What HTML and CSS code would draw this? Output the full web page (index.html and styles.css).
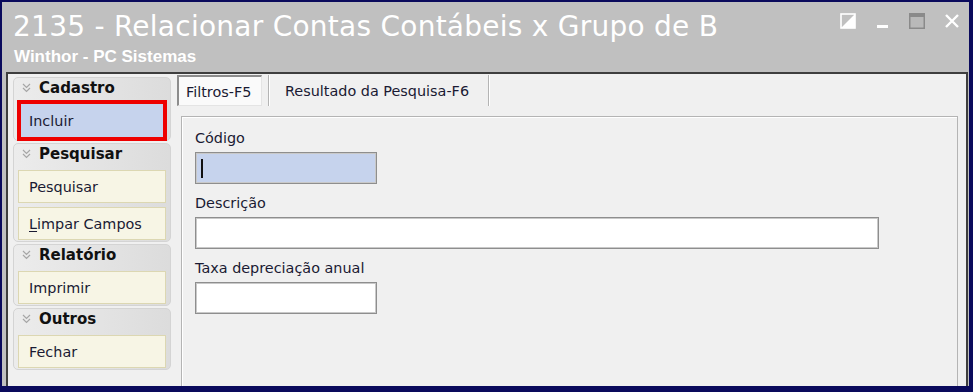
FILE: index.html
```html
<!DOCTYPE html>
<html lang="pt-BR">
<head>
<meta charset="utf-8">
<title>2135 - Relacionar Contas Contábeis x Grupo de B</title>
<link rel="stylesheet" href="styles.css">
</head>
<body>
<div class="window">
  <div class="titlebar">
    <div class="titles">
      <div class="title">2135 - Relacionar Contas Contábeis x Grupo de B</div>
      <div class="subtitle">Winthor - PC Sistemas</div>
    </div>
    <div class="controls">
      <span class="ctl"><svg width="16" height="16" viewBox="0 0 16 16"><rect x="1" y="1" width="14" height="14" fill="none" stroke="#fff" stroke-width="1.6"/><polygon points="15,1 15,15 1,15" fill="#fff"/></svg></span>
      <span class="ctl"><svg width="16" height="16" viewBox="0 0 16 16"><rect x="2" y="12" width="11" height="3" fill="#fff"/></svg></span>
      <span class="ctl"><svg width="16" height="16" viewBox="0 0 16 16"><rect x="0.75" y="0.75" width="14.5" height="14.5" fill="#b9b9b9" stroke="#8a8a8a" stroke-width="1.5"/><rect x="1" y="1" width="14" height="3" fill="#8a8a8a"/></svg></span>
      <span class="ctl"><svg width="16" height="16" viewBox="0 0 16 16"><path d="M2 2 L14 14 M14 2 L2 14" stroke="#fff" stroke-width="2.4" fill="none"/></svg></span>
    </div>
  </div>
  <div class="frame">
    <aside class="sidebar">
      <div class="group">
        <div class="group-head"><svg class="chev" width="9" height="10" viewBox="0 0 9 10"><path d="M1 1 L4.5 4.5 L8 1 M1 5 L4.5 8.5 L8 5" fill="none" stroke="#a6a6a6" stroke-width="1.2"/></svg><span>Cadastro</span></div>
        <div class="btn selected">Incluir</div>
      </div>
      <div class="group">
        <div class="group-head"><svg class="chev" width="9" height="10" viewBox="0 0 9 10"><path d="M1 1 L4.5 4.5 L8 1 M1 5 L4.5 8.5 L8 5" fill="none" stroke="#a6a6a6" stroke-width="1.2"/></svg><span>Pesquisar</span></div>
        <div class="btn">Pesquisar</div>
        <div class="btn"><u>L</u>impar Campos</div>
      </div>
      <div class="group">
        <div class="group-head"><svg class="chev" width="9" height="10" viewBox="0 0 9 10"><path d="M1 1 L4.5 4.5 L8 1 M1 5 L4.5 8.5 L8 5" fill="none" stroke="#a6a6a6" stroke-width="1.2"/></svg><span>Relatório</span></div>
        <div class="btn">Imprimir</div>
      </div>
      <div class="group">
        <div class="group-head"><svg class="chev" width="9" height="10" viewBox="0 0 9 10"><path d="M1 1 L4.5 4.5 L8 1 M1 5 L4.5 8.5 L8 5" fill="none" stroke="#a6a6a6" stroke-width="1.2"/></svg><span>Outros</span></div>
        <div class="btn">Fechar</div>
      </div>
    </aside>
    <main class="main">
      <div class="tabs">
        <div class="tab active">Filtros-F5</div>
        <div class="tab-sep"></div>
        <div class="tab">Resultado da Pesquisa-F6</div>
        <div class="tab-sep"></div>
      </div>
      <div class="panel">
        <div class="field">
          <label class="label">Código</label>
          <div class="input input-short focused"><span class="caret"></span></div>
        </div>
        <div class="field">
          <label class="label">Descrição</label>
          <div class="input input-long"></div>
        </div>
        <div class="field">
          <label class="label">Taxa depreciação anual</label>
          <div class="input input-short"></div>
        </div>
      </div>
    </main>
  </div>
</div>
</body>
</html>
```

FILE: styles.css
```css
* { box-sizing: border-box; }
html, body { margin: 0; height: 100%; }
body {
  background: #0a0a5c;
  padding: 2px 4px 6px 2px;
  font-family: "DejaVu Sans", sans-serif;
  font-size: 14.4px;
  color: #1a1a33;
  overflow: hidden;
}
.window {
  height: 384px;
  background: #c0c0c0;
  display: flex;
  flex-direction: column;
}
.titlebar {
  height: 70px;
  display: flex;
  justify-content: space-between;
  align-items: flex-start;
  padding: 9px 0 0 11px;
  flex: none;
}
.titles { display: flex; flex-direction: column; gap: 4px; }
.title {
  font-family: "DejaVu Sans", sans-serif;
  font-size: 28px;
  line-height: 32px;
  color: #fff;
  white-space: nowrap;
  letter-spacing: 0.25px;
}
.subtitle {
  font-family: "Liberation Sans", Arial, sans-serif;
  font-weight: bold;
  font-size: 17px;
  line-height: 19px;
  color: #fff;
  padding-left: 1px;
}
.controls { display: flex; margin-top: 2px; }
.ctl { width: 34.5px; height: 16px; display: flex; justify-content: center; }
.ctl svg { display: block; }

.frame {
  flex: 1;
  margin: 0 1px 0 4px;
  border: 2px solid #3e3e3e;
  border-bottom: none;
  background: #f0f0f0;
  display: flex;
  min-height: 0;
}
.sidebar {
  width: 169px;
  flex: none;
  padding: 3px 6px 0 5px;
  display: flex;
  flex-direction: column;
  gap: 2px;
}
.group {
  border: 1px solid #d4d4d4;
  border-radius: 5px;
  background: linear-gradient(to right, #ececec, #dcdcdc);
  padding: 0 4px 1px;
}
.group-head {
  height: 26px;
  display: flex;
  align-items: flex-start;
  padding: 1px 0 0 4px;
  line-height: 18px;
  font-weight: bold;
  font-size: 15px;
  color: #111;
}
.chev { margin: 4px 8px 0 0; flex: none; }
.btn {
  height: 33px;
  border: 1px solid #dcd7b2;
  background: #f7f5e5;
  display: flex;
  align-items: center;
  padding-left: 10px;
  margin-bottom: 4px;
}
.btn:last-child { margin-bottom: 0; }
.btn.selected {
  height: 41px;
  margin: -4px -1px -2px -1px;
  border: 4px solid #ee0000;
  background: #c6d3ed;
  padding-left: 8px;
}
.btn u { text-decoration: underline; text-underline-offset: 2px; }

.main {
  flex: 1;
  display: flex;
  flex-direction: column;
  min-width: 0;
}
.tabs {
  display: flex;
  height: 31px;
  margin-top: 1px;
  align-items: stretch;
}
.tab {
  display: flex;
  align-items: center;
  padding: 0 19px 0 15px;
  white-space: nowrap;
}
.tab.active {
  width: 85px;
  padding: 1px 0 0 7px;
  border-top: 2px solid #8c8c8c;
  border-left: 2px solid #8c8c8c;
  border-right: 1px solid #e4e4e4;
  border-bottom: 1px solid #e4e4e4;
  background: #fafafa;
  margin-right: 6px;
}
.tab-sep { width: 2px; background: linear-gradient(to right, #b4b4b4 50%, #fff 50%); }
.panel {
  flex: 1;
  margin: 10px 8px 0 4px;
  border: 1px solid #b4b4b4;
  border-bottom: none;
  box-shadow: inset 1px 1px 0 #fff;
  padding: 13px 0 0 13px;
  display: flex;
  flex-direction: column;
  gap: 11px;
}
.field { display: flex; flex-direction: column; }
.label { line-height: 16px; margin-bottom: 6px; }
.input {
  height: 32px;
  background: #fff;
  border: 1px solid #8e8e8e;
  box-shadow: inset 0 0 0 1px #c9c9c9;
  position: relative;
}
.input-short { width: 182px; }
.input-long { width: 684px; }
.input.focused { background: #c6d3ed; }
.caret {
  position: absolute;
  left: 5px;
  top: 6px;
  width: 1.5px;
  height: 19px;
  background: #111;
}
```
